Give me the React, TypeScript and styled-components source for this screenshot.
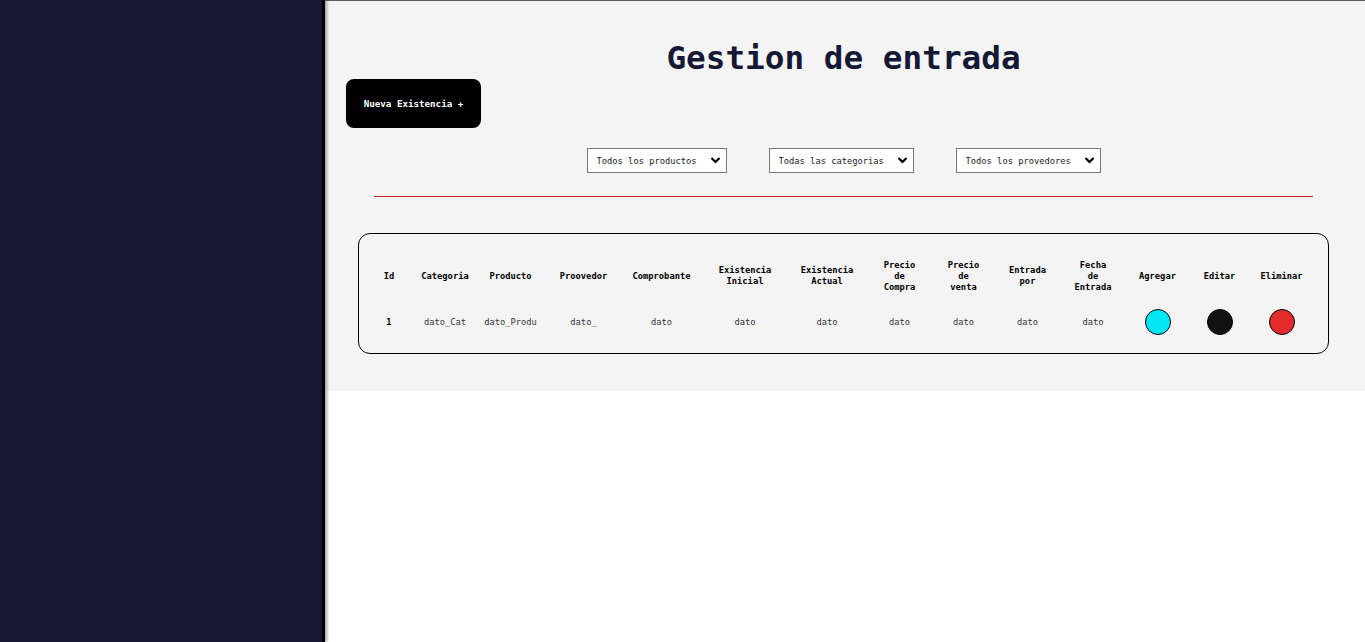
import React from 'react'
import styled, { createGlobalStyle } from 'styled-components'

const GlobalStyle = createGlobalStyle`
  html, body {
    margin: 0;
    padding: 0;
    background: #ffffff;
  }
  body {
    font-family: "DejaVu Sans Mono", "Liberation Mono", monospace;
  }
`

const Layout = styled.div`
  display: flex;
  min-height: 100vh;
`

const Sidebar = styled.aside`
  width: 322px;
  flex-shrink: 0;
  background: #141834;
  position: relative;
  z-index: 1;
  box-shadow: 3px 0 0 #000000, 5px 0 3px rgba(0, 0, 0, 0.35);
`

const Main = styled.main`
  flex: 1;
  align-self: flex-start;
  background: #f4f4f4;
  border-top: 1px solid #5a5a5a;
  padding: 37px 0 37px;
  display: flex;
  flex-direction: column;
`

const Title = styled.h1`
  margin: 0;
  text-align: center;
  font-size: 32.7px;
  line-height: 40px;
  font-weight: bold;
  color: #141834;
`

const NewButton = styled.button`
  align-self: flex-start;
  margin: 1px 0 0 24px;
  width: 135px;
  height: 49px;
  border: none;
  border-radius: 8px;
  background: #000000;
  color: #ffffff;
  font-family: inherit;
  font-size: 9.2px;
  font-weight: bold;
  cursor: pointer;
`

const Filters = styled.div`
  display: flex;
  justify-content: center;
  gap: 42px;
  margin-top: 20px;
`

const SelectBox = styled.div`
  position: relative;
  display: inline-flex;
`

const Select = styled.select`
  appearance: none;
  -webkit-appearance: none;
  height: 25px;
  padding: 0 28px 0 9px;
  border: 1px solid #777777;
  border-radius: 0;
  background: #ffffff;
  color: #222222;
  font-family: inherit;
  font-size: 8.75px;
`

const Chevron = styled.svg`
  position: absolute;
  right: 6px;
  top: 8px;
  width: 11px;
  height: 9px;
  pointer-events: none;
`

const Divider = styled.div`
  width: 90%;
  height: 1px;
  margin: 23px auto 0;
  background: #cc1f1f;
`

const TableCard = styled.div`
  margin: 36px 36px 0;
  border: 1px solid #000000;
  border-radius: 12px;
  padding: 19px 15px 8px 3px;
`

const Table = styled.table`
  width: 951px;
  table-layout: fixed;
  border-collapse: collapse;
  font-size: 8.75px;
`

const HeadCell = styled.th`
  height: 46px;
  padding: 0;
  line-height: 11px;
  font-weight: bold;
  color: #000000;
  text-align: center;
  vertical-align: middle;
`

const Cell = styled.td<{ $bold?: boolean }>`
  height: 46px;
  padding: 0;
  text-align: center;
  vertical-align: middle;
  color: ${(props) => (props.$bold ? '#000000' : '#333333')};
  font-weight: ${(props) => (props.$bold ? 'bold' : 'normal')};
`

const Circle = styled.button<{ $color: string }>`
  display: inline-block;
  width: 26px;
  height: 26px;
  padding: 0;
  border-radius: 50%;
  border: 1px solid #000000;
  background: ${(props) => props.$color};
  cursor: pointer;
  vertical-align: middle;
`

const columns = [
  { label: ['Id'], width: 54 },
  { label: ['Categoria'], width: 58 },
  { label: ['Producto'], width: 73 },
  { label: ['Proovedor'], width: 73 },
  { label: ['Comprobante'], width: 83 },
  { label: ['Existencia', 'Inicial'], width: 84 },
  { label: ['Existencia', 'Actual'], width: 80 },
  { label: ['Precio', 'de', 'Compra'], width: 65 },
  { label: ['Precio', 'de', 'venta'], width: 63 },
  { label: ['Entrada', 'por'], width: 65 },
  { label: ['Fecha', 'de', 'Entrada'], width: 66 },
  { label: ['Agregar'], width: 63 },
  { label: ['Editar'], width: 61 },
  { label: ['Eliminar'], width: 63 },
]

const filters = ['Todos los productos', 'Todas las categorias', 'Todos los provedores']

const App = () => {
  return (
    <>
      <GlobalStyle />
      <Layout>
        <Sidebar />
        <Main>
          <Title>Gestion de entrada</Title>
          <NewButton>Nueva Existencia +</NewButton>
          <Filters>
            {filters.map((f) => (
              <SelectBox key={f}>
                <Select defaultValue={f}>
                  <option>{f}</option>
                </Select>
                <Chevron viewBox="0 0 11 9">
                  <path d="M1.5 2 L5.5 6 L9.5 2" fill="none" stroke="#000" strokeWidth="2.2" />
                </Chevron>
              </SelectBox>
            ))}
          </Filters>
          <Divider />
          <TableCard>
            <Table>
              <colgroup>
                {columns.map((c, i) => (
                  <col key={i} style={{ width: c.width }} />
                ))}
              </colgroup>
              <thead>
                <tr>
                  {columns.map((c, i) => (
                    <HeadCell key={i}>
                      {c.label.map((l, j) => (
                        <React.Fragment key={j}>
                          {j > 0 && <br />}
                          {l}
                        </React.Fragment>
                      ))}
                    </HeadCell>
                  ))}
                </tr>
              </thead>
              <tbody>
                <tr>
                  <Cell $bold>1</Cell>
                  <Cell>dato_Cat</Cell>
                  <Cell>dato_Produ</Cell>
                  <Cell>dato_</Cell>
                  <Cell>dato</Cell>
                  <Cell>dato</Cell>
                  <Cell>dato</Cell>
                  <Cell>dato</Cell>
                  <Cell>dato</Cell>
                  <Cell>dato</Cell>
                  <Cell>dato</Cell>
                  <Cell><Circle $color="#00e6f4" /></Cell>
                  <Cell><Circle $color="#111111" /></Cell>
                  <Cell><Circle $color="#e32b2b" /></Cell>
                </tr>
              </tbody>
            </Table>
          </TableCard>
        </Main>
      </Layout>
    </>
  )
}

export default App
